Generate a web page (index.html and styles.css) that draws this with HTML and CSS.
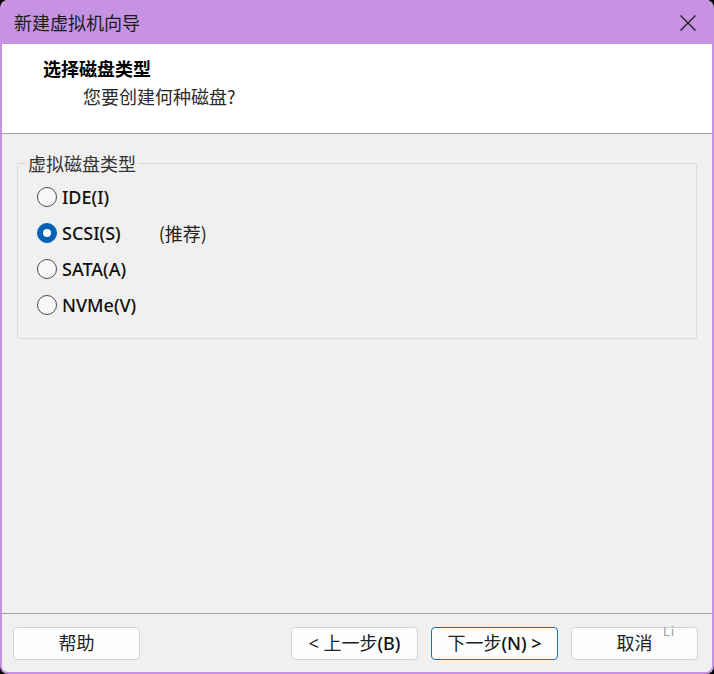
FILE: index.html
```html
<!DOCTYPE html>
<html lang="zh-CN">
<head>
<meta charset="utf-8">
<title>新建虚拟机向导</title>
<link rel="stylesheet" href="styles.css">
</head>
<body>
<div class="window">
  <div class="titlebar">
    <span class="title">新建虚拟机向导</span>
    <span class="close">
      <svg width="16" height="16" viewBox="0 0 16 16"><path d="M0.5 0.5 L15.5 15.5 M15.5 0.5 L0.5 15.5" stroke="#1a1a1a" stroke-width="1.3" fill="none"/></svg>
    </span>
  </div>
  <div class="header">
    <div class="h-title">选择磁盘类型</div>
    <div class="h-sub">您要创建何种磁盘?</div>
  </div>
  <div class="content">
    <div class="group">
      <span class="group-label">虚拟磁盘类型</span>
      <div class="row"><span class="radio"></span><span class="rlabel">IDE(I)</span></div>
      <div class="row"><span class="radio checked"></span><span class="rlabel">SCSI(S)</span><span class="note">(推荐)</span></div>
      <div class="row"><span class="radio"></span><span class="rlabel">SATA(A)</span></div>
      <div class="row"><span class="radio"></span><span class="rlabel">NVMe(V)</span></div>
    </div>
  </div>
  <div class="footer">
    <button class="btn">帮助</button>
    <span class="spacer"></span>
    <button class="btn">&lt; 上一步<span class="lat">(B)</span></button>
    <button class="btn focus">下一步<span class="lat">(N) &gt;</span></button>
    <button class="btn cancel">取消<span class="li">Li</span></button>
  </div>
</div>
</body>
</html>
```
FILE: styles.css
```css
* { box-sizing: border-box; }
html, body { margin: 0; padding: 0; }
body {
  background: #000;
  width: 714px;
  height: 674px;
  overflow: hidden;
  font-family: "Noto Sans", "Noto Sans CJK SC", sans-serif;
}
.window {
  width: 714px;
  height: 674px;
  background: #f0f0f0;
  border: 2px solid #c792e2;
  border-top: 0;
  border-radius: 8px;
  overflow: hidden;
  display: flex;
  flex-direction: column;
}
.titlebar {
  height: 44px;
  flex: none;
  background: #c792e2;
  margin: 0 -2px;
  padding: 0 18px 0 14px;
  display: flex;
  align-items: center;
  justify-content: space-between;
}
.title {
  font-family: "Noto Sans CJK SC", sans-serif;
  font-size: 18px;
  color: #1a1a1a;
  line-height: 24px;
  margin-top: -1px;
}
.close { display: flex; width: 16px; height: 16px; margin-top: 1px; }
.header {
  flex: none;
  height: 90px;
  background: #fff;
  border-bottom: 1px solid #a0a0a0;
  padding: 12px 0 0 41px;
  font-family: "Noto Sans CJK SC", sans-serif;
  font-size: 18px;
  line-height: 24px;
}
.h-title { font-weight: bold; color: #000; }
.h-sub { margin-top: 4px; padding-left: 40px; color: #2a2a2a; }
.content { flex: 1; padding: 29px 15px 0 15px; }
.group {
  position: relative;
  border: 1px solid #dadada;
  border-radius: 2px;
  padding: 15px 0 15px 19px;
}
.group-label {
  position: absolute;
  top: -12px;
  left: 8px;
  padding: 0 2px;
  background: #f0f0f0;
  font-family: "Noto Sans CJK SC", sans-serif;
  font-size: 18px;
  line-height: 22px;
  color: #333;
}
.row {
  height: 36px;
  display: flex;
  align-items: center;
}
.radio {
  width: 20px;
  height: 20px;
  border-radius: 50%;
  border: 1px solid #4a4a4a;
  background: #f7f7f7;
  flex: none;
  display: flex;
  align-items: center;
  justify-content: center;
}
.radio.checked { background: #0062b4; border-color: #0062b4; }
.radio.checked::after {
  content: "";
  width: 8px;
  height: 8px;
  border-radius: 50%;
  background: #fff;
}
.rlabel {
  margin-left: 5px;
  font-size: 18px;
  font-weight: 500;
  color: #111;
  line-height: 22px;
}
.note {
  margin-left: 38px;
  font-family: "Noto Sans CJK SC", sans-serif;
  font-size: 18px;
  color: #222;
  line-height: 22px;
}
.footer {
  flex: none;
  border-top: 1px solid #a0a0a0;
  padding: 13px 14px 12px 11px;
  display: flex;
  gap: 13px;
}
.spacer { flex: 1; }
.btn {
  position: relative;
  flex: none;
  width: 127px;
  height: 33px;
  border: 1px solid #d3d3d3;
  border-radius: 4px;
  background: #fdfdfd;
  font-family: "Noto Sans", "Noto Sans CJK SC", sans-serif;
  font-size: 18px;
  font-weight: 400;
  color: #222;
  padding: 0;
  line-height: 31px;
}
.btn .lat { font-weight: 500; color: #111; }
.btn.focus { border: 1.5px solid #1f6fb2; }
.li {
  position: absolute;
  top: -4px;
  left: 91px;
  font-size: 13px;
  font-weight: 400;
  line-height: 14px;
  letter-spacing: 1px;
  color: #9a9a9a;
}
```
